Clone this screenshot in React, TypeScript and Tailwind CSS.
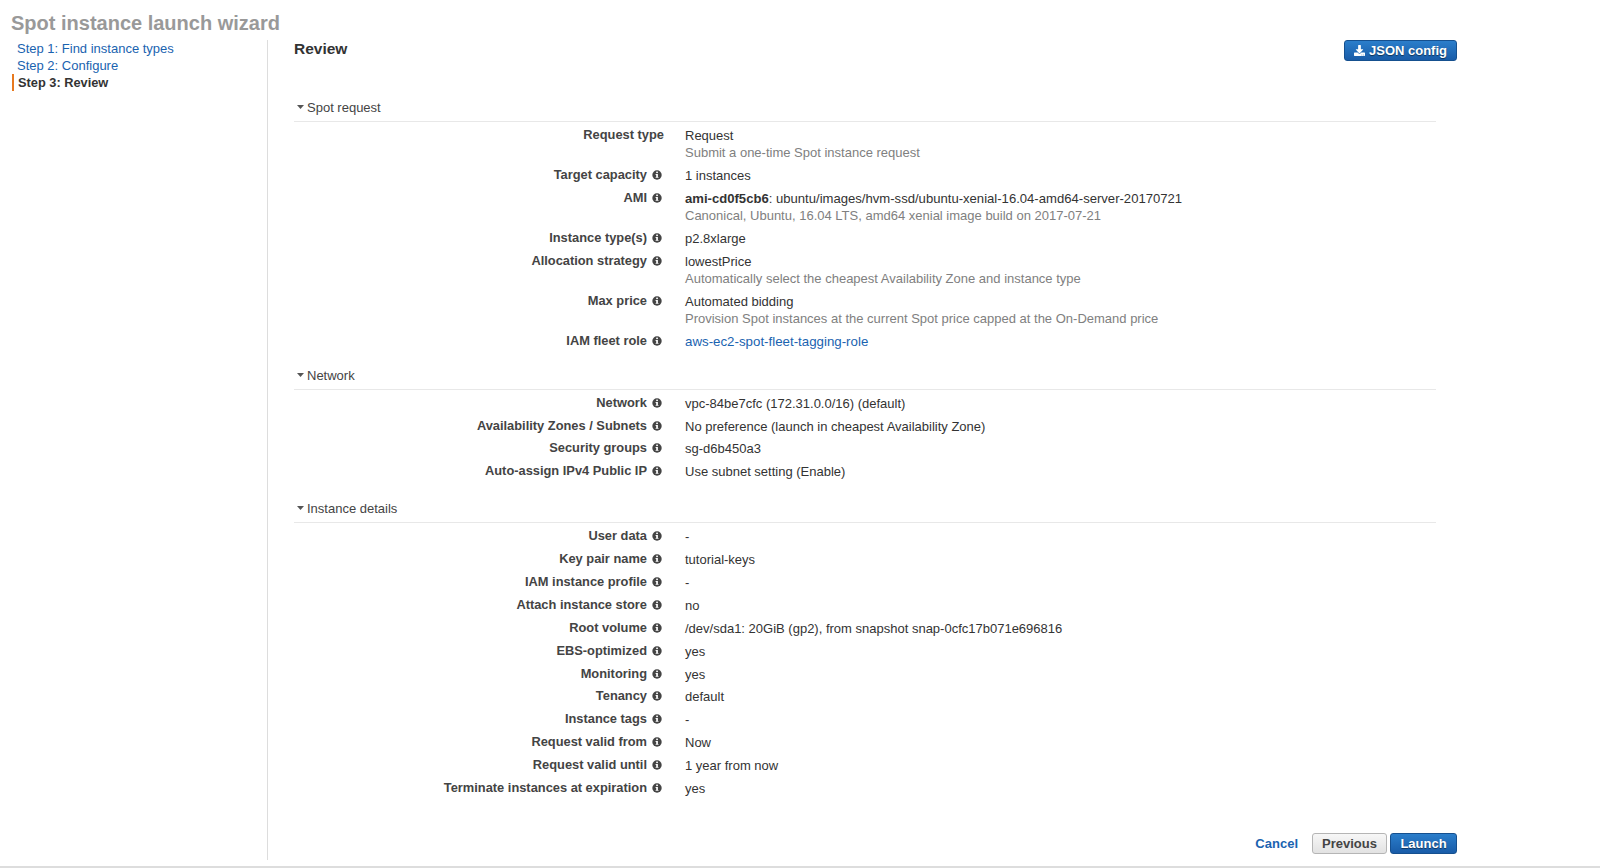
import React from "react";
import { FaDownload } from "react-icons/fa";

function Info() {
  return (
    <svg width="10" height="10" viewBox="0 0 10 10" className="shrink-0">
      <circle cx="5" cy="5" r="4.7" fill="#444444" />
      <rect x="4.2" y="1.6" width="1.7" height="1.5" fill="#ffffff" />
      <path d="M3.6 4h2.3v2.9h.6v.9H3.6v-.9h.6V4.9h-.6z" fill="#ffffff" />
    </svg>
  );
}

function Caret() {
  return (
    <svg width="7" height="4" viewBox="0 0 7 4" className="shrink-0">
      <path d="M0 0h7L3.5 4z" fill="#555555" />
    </svg>
  );
}

type R = { label: string; value: React.ReactNode; sub?: string; noInfo?: boolean };

function Row({ label, value, sub, noInfo }: R) {
  return (
    <div className={`flex ${sub ? "h-[40px]" : "h-[22.9px]"}`}>
      <div className="w-[371px] shrink-0 flex justify-end items-start gap-[5px] pr-[3px]">
        <span className={`font-bold text-[12.85px] text-[#444444] leading-[17px] -mt-[1px] ${noInfo ? "-mr-[2px]" : ""}`}>{label}</span>
        {!noInfo && <span className="mt-[3px]"><Info /></span>}
      </div>
      <div className="ml-[20px] min-w-0">
        <div className="text-[#333333] leading-[17px]">{value}</div>
        {sub && <div className="text-[#808080] leading-[17px]">{sub}</div>}
      </div>
    </div>
  );
}

function Section({ title, rows }: { title: string; rows: R[] }) {
  return (
    <section>
      <div className="h-[22px] border-b border-[#e8e8e8] flex items-start gap-[2px] pl-[3px] w-[1139px] box-content">
        <span className="mt-[6px]"><Caret /></span>
        <span className="text-[#444444] leading-[17px] ml-[1px]">{title}</span>
      </div>
      <div className="pt-[5px]">
        {rows.map((r) => (
          <Row key={r.label} {...r} />
        ))}
      </div>
    </section>
  );
}

const spot: R[] = [
  { label: "Request type", value: "Request", sub: "Submit a one-time Spot instance request", noInfo: true },
  { label: "Target capacity", value: "1 instances" },
  {
    label: "AMI",
    value: (
      <span className="text-[13.1px]">
        <b className="font-bold">ami-cd0f5cb6</b>: ubuntu/images/hvm-ssd/ubuntu-xenial-16.04-amd64-server-20170721
      </span>
    ),
    sub: "Canonical, Ubuntu, 16.04 LTS, amd64 xenial image build on 2017-07-21",
  },
  { label: "Instance type(s)", value: "p2.8xlarge" },
  { label: "Allocation strategy", value: "lowestPrice", sub: "Automatically select the cheapest Availability Zone and instance type" },
  { label: "Max price", value: "Automated bidding", sub: "Provision Spot instances at the current Spot price capped at the On-Demand price" },
  { label: "IAM fleet role", value: <a className="text-[13.3px] text-[#1a63b0]">aws-ec2-spot-fleet-tagging-role</a> },
];

const network: R[] = [
  { label: "Network", value: "vpc-84be7cfc (172.31.0.0/16) (default)" },
  { label: "Availability Zones / Subnets", value: "No preference (launch in cheapest Availability Zone)" },
  { label: "Security groups", value: "sg-d6b450a3" },
  { label: "Auto-assign IPv4 Public IP", value: "Use subnet setting (Enable)" },
];

const details: R[] = [
  { label: "User data", value: "-" },
  { label: "Key pair name", value: "tutorial-keys" },
  { label: "IAM instance profile", value: "-" },
  { label: "Attach instance store", value: "no" },
  { label: "Root volume", value: "/dev/sda1: 20GiB (gp2), from snapshot snap-0cfc17b071e696816" },
  { label: "EBS-optimized", value: "yes" },
  { label: "Monitoring", value: "yes" },
  { label: "Tenancy", value: "default" },
  { label: "Instance tags", value: "-" },
  { label: "Request valid from", value: "Now" },
  { label: "Request valid until", value: "1 year from now" },
  { label: "Terminate instances at expiration", value: "yes" },
];

const blueBtn =
  "h-[21px] rounded-[3px] border border-[#15508f] bg-gradient-to-b from-[#2b7ecb] to-[#195ca8] text-white font-bold text-[13px] flex items-center justify-center [text-shadow:0_1px_1px_rgba(0,0,0,0.5)]";

export default function App() {
  return (
    <div className="w-[1600px] h-[868px] bg-white overflow-hidden flex flex-col text-[13px] font-['Liberation_Sans',Arial,sans-serif]">
      <h1 className="h-[40px] pl-[11px] pt-[11px] text-[20px] leading-[24px] font-bold text-[#999999]">
        Spot instance launch wizard
      </h1>
      <div className="flex flex-1 min-h-0">
        <nav className="w-[268px] shrink-0 border-r border-[#dddddd] mb-[6px] pl-[12px]">
          <ul className="leading-[17px]">
            <li className="pl-[5px] text-[#1a63b0]">Step 1: Find instance types</li>
            <li className="pl-[5px] text-[#1a63b0]">Step 2: Configure</li>
            <li className="pl-[4px] border-l-2 border-[#e8791e] font-bold text-[12.8px] text-[#333333]">Step 3: Review</li>
          </ul>
        </nav>
        <main className="flex-1 min-w-0 pl-[26px] flex flex-col">
          <div className="flex justify-between items-start w-[1163px] h-[59px]">
            <h2 className="text-[15.5px] leading-[18px] font-bold text-[#333333]">Review</h2>
            <button className={`${blueBtn} w-[113px] gap-[4px]`}>
              <FaDownload className="w-[11px] h-[11px]" />
              JSON config
            </button>
          </div>
          <Section title="Spot request" rows={spot} />
          <div className="h-[11px]" />
          <Section title="Network" rows={network} />
          <div className="h-[14px]" />
          <Section title="Instance details" rows={details} />
          <div className="flex-1" />
          <div className="flex items-center justify-end w-[1163px] mb-[12px]">
            <a className="text-[#1a63b0] font-bold mr-[14px]">Cancel</a>
            <button className="h-[21px] w-[75px] mr-[3px] rounded-[3px] border border-[#b5b5b5] bg-gradient-to-b from-[#f7f7f7] to-[#e2e2e2] text-[#444444] font-bold text-[13px]">
              Previous
            </button>
            <button className={`${blueBtn} w-[67px]`}>Launch</button>
          </div>
        </main>
      </div>
      <div className="h-[2px] bg-[#dddddd]" />
    </div>
  );
}
